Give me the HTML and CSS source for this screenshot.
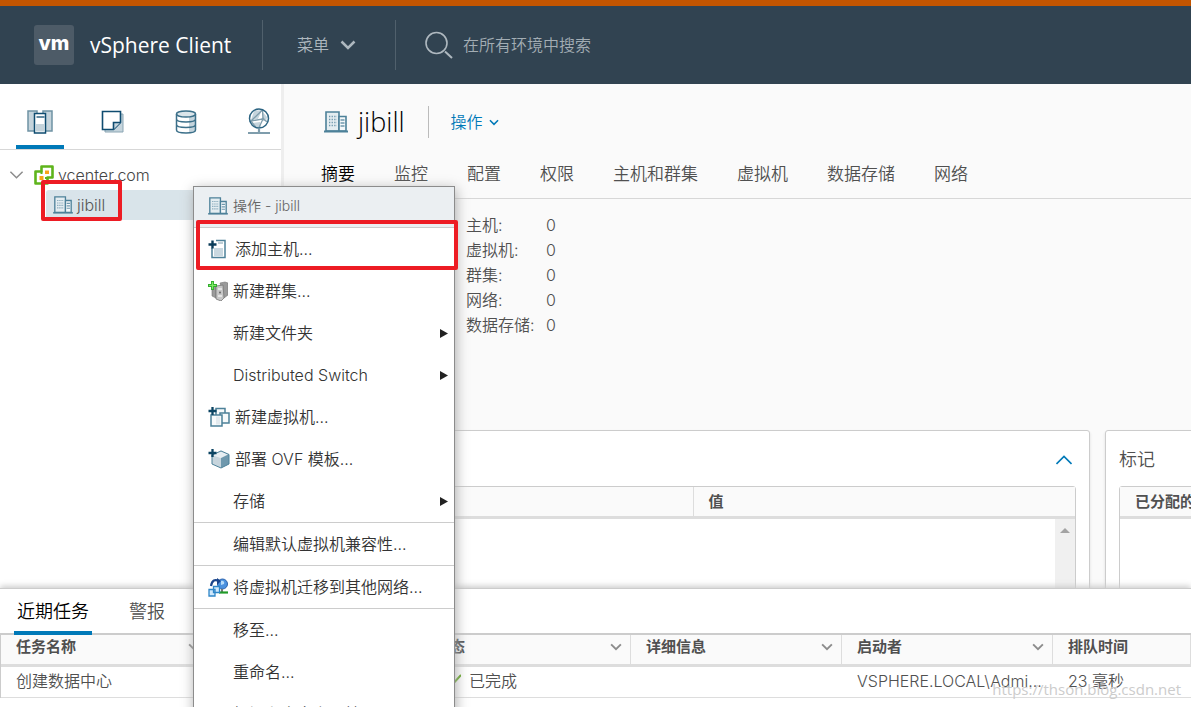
FILE: index.html
```html
<!DOCTYPE html>
<html lang="zh-CN">
<head>
<meta charset="utf-8">
<title>vSphere Client</title>
<link rel="stylesheet" href="styles.css">
</head>
<body>
<svg class="defs" aria-hidden="true">
  <symbol id="datacenter" viewBox="0 0 24 22">
    <path d="M2 1h13v19H2z" fill="#e4edf1" stroke="#4d8199" stroke-width="1.6"/>
    <path d="M15 5.500h7V20h-7z" fill="#f4f8fa" stroke="#4d8199" stroke-width="1.6"/>
    <path d="M5 5.500h8M5 8.500h8M5 11.500h8M5 14.500h8" stroke="#6f98ad" stroke-width="1.4" stroke-dasharray="1.300 1.300"/>
    <path d="M16.500 9h4M16.500 12h4M16.500 15h4" stroke="#6f98ad" stroke-width="1.4"/>
    <path d="M0 20.500h24" stroke="#4d8199" stroke-width="2"/>
  </symbol>
  <symbol id="down" viewBox="0 0 16 10"><path d="M1.500 1.500L8 8l6.500-6.500" fill="none" stroke="currentColor" stroke-width="2.500"/></symbol>
  <symbol id="thin-down" viewBox="0 0 16 10"><path d="M1.500 1.500L8 8l6.500-6.500" fill="none" stroke="currentColor" stroke-width="1.600"/></symbol>
  <symbol id="arrow" viewBox="0 0 8 9"><path d="M0 0l8 4.500L0 9z" fill="#222"/></symbol>
</svg>

<header class="topbar">
  <div class="brand"><span class="logo">vm</span><span class="product">vSphere Client</span></div>
  <button class="main-menu" type="button">菜单 <svg class="menu-chevron"><use href="#down"/></svg></button>
  <label class="search">
    <svg class="search-icon" viewBox="0 0 28 28" fill="none" stroke="#aeb8bf" stroke-width="1.600"><circle cx="11.500" cy="12" r="10.500"/><path d="M20 20.500l7 6.500" stroke-width="2"/></svg>
    <input class="search-input" type="text" placeholder="在所有环境中搜索" aria-label="在所有环境中搜索">
  </label>
</header>

<main class="workspace">
  <aside class="sidebar">
    <nav class="inventory">
      <button class="inv-tab active" type="button" aria-label="主机和群集"><svg width="26" height="24" viewBox="0 0 26 24"><path d="M1 1h9v20H1zM16 1h9v20h-9z" fill="#c5d4dc" stroke="#6f92a4" stroke-width="1.500"/><path d="M7.500 3.500h11v19.500h-11z" fill="#fff" stroke="#0f4c70" stroke-width="1.500"/><path d="M9.500 7h8" stroke="#0f4c70" stroke-width="1.300"/><path d="M9 14h8v7.500H9z" fill="#c5d4dc"/></svg></button>
      <button class="inv-tab" type="button" aria-label="虚拟机和模板"><svg width="24" height="24" viewBox="0 0 24 24"><path d="M4 4h18v18H4z" fill="#c5d4dc" stroke="#8ba6b4"/><path d="M1.500 1.500h18v11l-7 7h-11z" fill="#fff" stroke="#0f4c70" stroke-width="1.600"/><path d="M12.500 19.500v-7h7" fill="#c5d4dc" stroke="#0f4c70" stroke-width="1.600"/></svg></button>
      <button class="inv-tab" type="button" aria-label="存储"><svg width="22" height="24" viewBox="0 0 22 24"><path d="M1.500 4v16c0 4 19 4 19 0V4" fill="#fff"/><path d="M14 5l6.500-1v17L14 23z" fill="#c5d4dc"/><g stroke="#3c708a" stroke-width="1.500"><ellipse cx="11" cy="4" rx="9.500" ry="3" fill="#dbe5ea"/><path fill="none" d="M1.500 4v16c0 4 19 4 19 0V4M1.500 9c0 4 19 4 19 0M1.500 14.500c0 4 19 4 19 0"/></g></svg></button>
      <button class="inv-tab" type="button" aria-label="网络"><svg width="24" height="27" viewBox="0 0 24 27"><path d="M7 3l8-1-4 9-7 1zM15 3l5 6-1 5-3-3zM5 15l8-1 1 5-5 1z" fill="#c5d4dc"/><path d="M15.500 2l.5 9-12 2 11.500-11M16 11l-4 8.500M16 11l4.500 3M4 13l5 6.500" fill="none" stroke="#7f9dac" stroke-width="1.300"/><circle cx="12" cy="10.500" r="9.500" fill="none" stroke="#2c6482" stroke-width="1.500"/><circle cx="16" cy="11" r="1.500" fill="#7f9dac"/><path d="M12 21v4M1 25h22" stroke="#7f9dac" stroke-width="2.200"/></svg></button>
    </nav>
    <ul class="tree">
      <li class="tree-row"><svg class="tree-chevron"><use href="#thin-down"/></svg><svg width="20" height="20" viewBox="0 0 20 20"><path d="M7.500 1.500h11v11h-5v6h-12v-12h6z" fill="#fff" stroke="#5eb41b" stroke-width="2.600" stroke-linejoin="round"/><path d="M11 5.500h4v3.500h-4zM5.500 11h4v4h-4z" fill="#f9a51a"/><path d="M7.500 6.500v2.500M13.500 13h-2.500" stroke="#5eb41b" stroke-width="2"/></svg><span>vcenter.com</span></li>
      <li class="tree-row child"><svg class="dc-icon"><use href="#datacenter"/></svg><span>jibill</span></li>
    </ul>
  </aside>

  <section class="content">
    <div class="title-row">
      <svg class="title-icon"><use href="#datacenter"/></svg>
      <h1 class="title">jibill</h1>
      <button class="actions" type="button">操作 <svg class="small-chevron"><use href="#down"/></svg></button>
    </div>
    <nav class="tabs">
      <a class="tab current" href="#">摘要</a><a class="tab" href="#">监控</a><a class="tab" href="#">配置</a><a class="tab" href="#">权限</a><a class="tab" href="#">主机和群集</a><a class="tab" href="#">虚拟机</a><a class="tab" href="#">数据存储</a><a class="tab" href="#">网络</a>
    </nav>
    <dl class="summary">
      <dt>主机:</dt><dd>0</dd><dt>虚拟机:</dt><dd>0</dd><dt>群集:</dt><dd>0</dd><dt>网络:</dt><dd>0</dd><dt>数据存储:</dt><dd>0</dd>
    </dl>
    <div class="cards">
      <section class="card">
        <div class="card-head"><span></span><button class="collapse" type="button" aria-label="折叠"><svg width="16" height="10" viewBox="0 0 16 10"><path d="M0.500 9L8 1.500 15.500 9" fill="none" stroke="#0079b8" stroke-width="1.600"/></svg></button></div>
        <div class="grid">
          <div class="grid-head"><span class="grid-cell"></span><span class="grid-cell">值</span></div>
          <div class="grid-body"><div class="scroll-track"><svg width="10" height="5" viewBox="0 0 10 5"><path d="M0 5l5-5 5 5z" fill="#a3a3a3"/></svg></div></div>
        </div>
      </section>
      <section class="card">
        <div class="card-head">标记</div>
        <div class="grid"><div class="grid-head"><span class="grid-cell">已分配的标记</span></div><div class="grid-body"></div></div>
      </section>
    </div>
  </section>
</main>

<section class="tasks">
  <nav class="task-tabs"><a class="task-tab current" href="#">近期任务</a><a class="task-tab" href="#">警报</a></nav>
  <table class="task-table">
    <colgroup><col class="col"><col class="col"><col class="col"><col class="col"><col class="col"><col></colgroup>
    <thead><tr>
      <th><div class="th">任务名称<svg class="sort"><use href="#down"/></svg></div></th>
      <th></th>
      <th><div class="th">状态<svg class="sort"><use href="#down"/></svg></div></th>
      <th><div class="th">详细信息<svg class="sort"><use href="#down"/></svg></div></th>
      <th><div class="th">启动者<svg class="sort"><use href="#down"/></svg></div></th>
      <th><div class="th">排队时间</div></th>
    </tr></thead>
    <tbody><tr>
      <td>创建数据中心</td><td></td>
      <td><div class="status"><svg width="26" height="14" viewBox="0 0 26 14"><path d="M12 8l4 4L26 1" fill="none" stroke="#60a61e" stroke-width="2"/></svg>已完成</div></td>
      <td></td><td>VSPHERE.LOCAL\Admi...</td><td>23 毫秒</td>
    </tr></tbody>
  </table>
</section>

<div class="context-menu">
  <div class="menu-title"><svg class="dc-icon"><use href="#datacenter"/></svg>操作 - jibill</div>
  <button class="item" type="button"><svg width="22" height="20" viewBox="0 0 22 20"><path d="M8 1.500h9v17H4V9" fill="#fff" stroke="#4d8199" stroke-width="1.500"/><path d="M6 9h9v8H6z" fill="#c9d8e0"/><path d="M10 4h5" stroke="#7f9dac"/><path d="M4.500 1.500v8M.5 5.500h8" stroke="#0b3c59" stroke-width="2.400"/></svg>添加主机...</button>
  <button class="item" type="button"><svg width="20" height="20" viewBox="0 0 20 20"><path d="M4 6l4-2v13l-4-2zM12 2l5-1 3 1v12l-4 3z" fill="#9b9b9b" stroke="#777" stroke-width=".6"/><path d="M8 5l7-1 1 13-3 3-5-2z" fill="#c6c6c6" stroke="#777" stroke-width=".8"/><path d="M10 8h4M10 15h4" stroke="#eee" stroke-width="1.500"/><circle cx="12" cy="11.500" r="1" fill="#666"/><path d="M4.500 0v9M0 4.500h9" stroke="#35ad31" stroke-width="3"/><path d="M4.500 1v7M1 4.500h7" stroke="#7eea63" stroke-width="1.200"/></svg>新建群集...</button>
  <button class="item" type="button"><span class="no-icon"></span>新建文件夹<svg class="sub"><use href="#arrow"/></svg></button>
  <button class="item" type="button"><span class="no-icon"></span>Distributed Switch<svg class="sub"><use href="#arrow"/></svg></button>
  <button class="item" type="button"><svg width="22" height="20" viewBox="0 0 22 20"><g fill="#f7fafb" stroke="#4d8199" stroke-width="1.500"><path d="M8 1.500h9v12H8z"/><path d="M12 6h9v10h-9z"/><path d="M3 8h11v11H3z"/></g><path d="M8 9.500h4v8H8z" fill="#e3eaee"/><path d="M4.500 0v8M.5 4h8" stroke="#0b4463" stroke-width="2.300"/></svg>新建虚拟机...</button>
  <button class="item" type="button"><svg width="22" height="20" viewBox="0 0 22 20"><path d="M4 6l9-5 8 4-8 4z" fill="#e7eef2"/><path d="M4 6l9 3v10l-9-4z" fill="#c7d5dd"/><path d="M13 9l8-4v10l-8 4z" fill="#6f98ad"/><path d="M4 6l9-4 8 3.500V15l-8 4-9-4z" fill="none" stroke="#4d8199"/><path d="M4.500 0v8M.5 4h8" stroke="#0b4463" stroke-width="2.300"/></svg>部署 OVF 模板...</button>
  <button class="item" type="button"><span class="no-icon"></span>存储<svg class="sub"><use href="#arrow"/></svg></button>
  <button class="item ruled" type="button"><span class="no-icon"></span>编辑默认虚拟机兼容性...</button>
  <button class="item ruled" type="button"><svg width="20" height="20" viewBox="0 0 20 20"><circle cx="14.500" cy="7" r="5" fill="#4b91df" stroke="#2a62ad"/><path d="M13 4c2-1 4 1 3 3l-3 1z" fill="#b6dcfa"/><path d="M14 12v3" stroke="#777" stroke-width="2"/><path d="M11 15.500h9" stroke="#209b27" stroke-width="2.200"/><path d="M3 9C4 3 7 2 11 4" fill="none" stroke="#18448b" stroke-width="2.200"/><path d="M9 1l4 3-4 4z" fill="#18448b"/><path d="M5.500 9.500h6v6h-6zM1 12.500h6V19H1z" fill="#cfe8fc" stroke="#2f86c8" stroke-width="1.300"/></svg>将虚拟机迁移到其他网络...</button>
  <button class="item ruled" type="button"><span class="no-icon"></span>移至...</button>
  <button class="item" type="button"><span class="no-icon"></span>重命名...</button>
  <button class="item" type="button"><span class="no-icon"></span>标记和自定义属性</button>
</div>
<div class="highlight highlight-tree"></div>
<div class="highlight highlight-add"></div>
<div class="watermark">https://thson.blog.csdn.net</div>
</body>
</html>
```
FILE: styles.css
```css
* { box-sizing: border-box; }
body {
  margin: 0;
  height: 100vh;
  display: flex;
  flex-direction: column;
  position: relative;
  overflow: hidden;
  background: #fafafa;
  color: #505050;
  font: 350 16px/24px Inter, "Noto Sans CJK SC", sans-serif;
}
button { font: inherit; color: inherit; background: none; border: 0; padding: 0; }
a { color: inherit; text-decoration: none; }
svg { flex: none; }
.defs { position: absolute; width: 0; height: 0; }

.topbar {
  flex: none;
  display: flex;
  align-items: center;
  height: 84px;
  border-top: 6px solid #c35500;
  background: #314351;
  color: #aeb8bf;
}
.brand { display: flex; align-items: center; gap: 16px; width: 262px; padding-left: 34px; }
.logo {
  width: 40px;
  height: 40px;
  border-radius: 3px;
  background: #4d5b67;
  color: #fff;
  font: 800 20px/36px Inter, sans-serif;
  text-align: center;
}
.product { color: #fff; font: 400 21px/28px "Open Sans", sans-serif; white-space: nowrap; }
.main-menu {
  display: flex;
  align-items: center;
  gap: 11px;
  width: 134px;
  height: 50px;
  padding-left: 34px;
  border: solid #50606c;
  border-width: 0 1px;
}
.menu-chevron { width: 16px; height: 10px; }
.search { flex: 1; display: flex; align-items: center; gap: 10px; padding-left: 29px; }
.search-icon { width: 28px; height: 28px; }
.search-input { flex: 1; border: 0; outline: 0; padding: 0; background: none; color: #fff; font: inherit; }
.search-input::placeholder { color: #a3adb4; opacity: 1; }

.workspace { flex: 1; min-height: 0; display: flex; }
.sidebar { flex: none; width: 284px; border-right: 3px solid #eee; background: #fff; }
.inventory { display: flex; gap: 25px; height: 66px; padding-left: 16px; border-bottom: 1px solid #d7d7d7; }
.inv-tab { flex: none; display: flex; align-items: center; justify-content: center; width: 48px; padding-top: 14px; border-bottom: 4px solid transparent; }
.inv-tab.active { border-bottom-color: #0079b8; }
.tree { list-style: none; margin: 0; padding: 10px 0; color: #454545; }
.tree-row { display: flex; align-items: center; gap: 4px; height: 30px; padding-left: 9px; }
.tree-chevron { width: 15px; height: 10px; margin-right: 6px; color: #8c8c8c; }
.tree-row.child { margin-left: 46px; padding-left: 7px; border-radius: 3px 0 0 3px; background: #d9e4ea; color: #565656; }
.dc-icon { width: 20px; height: 18px; }

.content { flex: 1; min-width: 0; overflow: hidden; }
.title-row { display: flex; align-items: center; padding: 22px 0 0 40px; }
.title-icon { width: 24px; height: 22px; }
.title { margin: 0 23px 0 10px; color: #000; font: 300 27px/32px "Open Sans", sans-serif; }
.actions { display: flex; align-items: center; gap: 6px; height: 32px; padding-left: 22px; border-left: 1px solid #bbb; color: #0079b8; }
.small-chevron { width: 10px; height: 7px; }
.tabs { display: flex; gap: 39px; padding: 24px 0 0 37px; border-bottom: 1px solid #d7d7d7; font-size: 17px; }
.tab { height: 36px; white-space: nowrap; }
.tab.current { color: #000; border-bottom: 3px solid #0079b8; }
.summary { display: grid; grid-template-columns: 80px 1fr; grid-auto-rows: 25px; align-items: center; margin: 13px 0 0; padding: 0 0 93px 182px; white-space: nowrap; }
.summary dd { margin: 0; }
.cards { display: flex; gap: 15px; padding-left: 12px; }
.card { flex: 0 0 calc(100% - 101px); height: 200px; padding: 0 13px; border: 1px solid #ccc; border-radius: 3px; background: #fff; box-shadow: 0 2px 3px #ddd; }
.card-head { display: flex; align-items: center; justify-content: space-between; height: 55px; padding-top: 2px; font-size: 18px; }
.collapse { display: flex; padding: 4px; }
.grid { border: 1px solid #ccc; border-radius: 3px; }
.grid-head { display: flex; height: 32px; border-bottom: 3px solid #ddd; background: #fafafa; }
.grid-cell { flex: 1; padding-left: 15px; font-size: 15px; line-height: 29px; font-weight: 700; }
.grid-cell + .grid-cell { border-left: 1px solid #ddd; }
.grid-body { display: flex; justify-content: flex-end; height: 110px; }
.scroll-track { display: flex; justify-content: center; width: 20px; padding-top: 9px; background: #f0f0f0; }

.tasks { flex: none; position: relative; border-top: 1px solid #ccc; background: #fff; box-shadow: 0 -2px 6px #ccc; padding-bottom: 9px; }
.task-tabs { display: flex; gap: 34px; height: 46px; padding-left: 14px; border-bottom: 2px solid #ccc; font-size: 18px; line-height: 46px; }
.task-tab { height: 46px; padding: 0 3px; }
.task-tab.current { color: #000; border-bottom: 4px solid #0079b8; }
.task-table { width: 100%; border-collapse: separate; border-spacing: 0; table-layout: fixed; border-left: 1px solid #ccc; }
.col { width: 211px; }
.col:first-child { width: 208px; }
.task-table th { height: 32px; padding: 0 8px 5px 15px; border-bottom: 3px solid #ddd; border-right: 1px solid #ddd; background: #fafafa; font-size: 15px; line-height: 24px; font-weight: 700; text-align: left; }
.th { display: flex; align-items: center; justify-content: space-between; }
.sort { width: 12px; height: 8px; color: #8c8c8c; }
.task-table td { height: 31px; padding: 0 0 2px 15px; border-bottom: 1px solid #ddd; white-space: nowrap; }
.status { display: flex; align-items: center; gap: 8px; }

.context-menu { position: absolute; left: 193px; top: 186px; width: 262px; border: 1px solid #8c8c8c; background: #fff; box-shadow: 1px 3px 12px #aaa; color: #333; }
.menu-title { display: flex; align-items: center; gap: 5px; height: 41px; padding: 0 14px 3px; border-bottom: 1px solid #ccc; background: #ebeff2; color: #666; font-size: 14px; }
.item { display: flex; align-items: center; gap: 5px; width: 100%; height: 42px; padding: 0 6px 0 14px; text-align: left; white-space: nowrap; }
.item.ruled { height: 43px; border-top: 1px solid #ccc; }
.no-icon { width: 20px; }
.sub { width: 8px; height: 9px; margin-left: auto; }

.highlight { position: absolute; border: 4px solid #ed1c24; border-radius: 2px; pointer-events: none; }
.highlight-tree { left: 41px; top: 180px; width: 81px; height: 41px; }
.highlight-add { left: 196px; top: 220px; width: 262px; height: 50px; }
.watermark { position: absolute; right: 10px; bottom: 6px; color: #ccc; font: 400 15px/24px "Open Sans", sans-serif; pointer-events: none; }
```
